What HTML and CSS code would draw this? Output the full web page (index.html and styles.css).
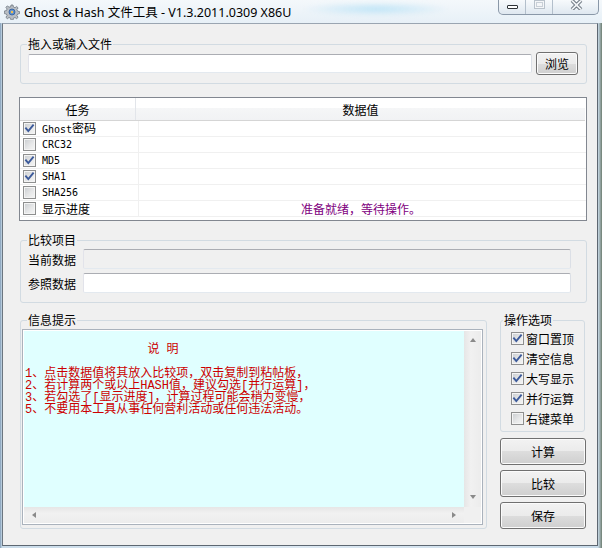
FILE: index.html
```html
<!DOCTYPE html>
<html lang="zh-CN">
<head>
<meta charset="utf-8">
<title>Ghost &amp; Hash 文件工具</title>
<link rel="stylesheet" href="styles.css">
</head>
<body>
<div class="window">
  <div class="titlebar">
    <svg class="appicon" viewBox="0 0 16 16">
      <g fill="#b9bec4" stroke="#6f7780" stroke-width="0.8">
        <path d="M7 1h2l.4 2 1.6.7 1.7-1.2 1.4 1.4-1.2 1.7.7 1.6 2 .4v2l-2 .4-.7 1.6 1.2 1.7-1.4 1.4-1.7-1.2-1.6.7-.4 2H7l-.4-2-1.6-.7-1.7 1.2-1.4-1.4 1.2-1.7-.7-1.6-2-.4V7l2-.4.7-1.6-1.2-1.7 1.4-1.4 1.7 1.2L6.6 3z"/>
      </g>
      <circle cx="8" cy="8" r="3" fill="#5b8fd0" stroke="#2f5c9a" stroke-width="0.8"/>
      <circle cx="8" cy="8" r="1.2" fill="#f2c14e"/>
    </svg>
    <span class="title">Ghost &amp; Hash 文件工具 - V1.3.2011.0309 X86U</span>
    <span class="glass"></span>
    <div class="caps">
      <span class="cap cap-min"><span class="min-ico"></span></span>
      <span class="cap cap-max">
        <svg class="max-ico" viewBox="0 0 11 9"><rect x="0.5" y="0.5" width="10" height="8" fill="#f4f6f8" stroke="#b9c2cb"/><rect x="2.5" y="2.5" width="6" height="4" fill="none" stroke="#c9d0d7"/></svg>
      </span>
      <span class="cap cap-close">
        <svg class="close-ico" viewBox="0 0 13 10"><path d="M2 0.5 11 9.5M11 0.5 2 9.5" stroke="#5e6873" stroke-width="3.6" fill="none"/><path d="M2 0.5 11 9.5M11 0.5 2 9.5" stroke="#eef1f4" stroke-width="1.8" fill="none"/></svg>
      </span>
    </div>
  </div>

  <div class="client">
    <fieldset class="group g-file">
      <legend>拖入或输入文件</legend>
      <div class="file-row">
        <span class="edit file-edit"></span>
        <button class="btn browse">浏览</button>
      </div>
    </fieldset>

    <div class="list">
      <div class="list-head">
        <span class="h1">任务</span>
        <span class="h2">数据值</span>
      </div>
      <div class="row">
        <span class="r1"><span class="cb"><svg class="tick" viewBox="0 0 11 11"><path d="M2 5.3 4.3 8 9 2.3"/></svg></span><span><span class="a">Ghost</span>密码</span></span>
        <span class="r2"></span>
      </div>
      <div class="row">
        <span class="r1"><span class="cb"></span><span class="a">CRC32</span></span>
        <span class="r2"></span>
      </div>
      <div class="row">
        <span class="r1"><span class="cb"><svg class="tick" viewBox="0 0 11 11"><path d="M2 5.3 4.3 8 9 2.3"/></svg></span><span class="a">MD5</span></span>
        <span class="r2"></span>
      </div>
      <div class="row">
        <span class="r1"><span class="cb"><svg class="tick" viewBox="0 0 11 11"><path d="M2 5.3 4.3 8 9 2.3"/></svg></span><span class="a">SHA1</span></span>
        <span class="r2"></span>
      </div>
      <div class="row">
        <span class="r1"><span class="cb"></span><span class="a">SHA256</span></span>
        <span class="r2"></span>
      </div>
      <div class="row">
        <span class="r1"><span class="cb"></span><span>显示进度</span></span>
        <span class="r2 status">准备就绪，等待操作。</span>
      </div>
    </div>

    <fieldset class="group g-cmp">
      <legend>比较项目</legend>
      <div class="cmp-row"><span class="lbl">当前数据</span><span class="edit disabled"></span></div>
      <div class="cmp-row"><span class="lbl">参照数据</span><span class="edit"></span></div>
    </fieldset>

    <div class="bottom">
      <fieldset class="group g-info">
        <legend>信息提示</legend>
        <div class="memo">
          <div class="memo-text">
                 说 明

1、点击数据值将其放入比较项，双击复制到粘帖板，
2、若计算两个或以上HASH值，建议勾选[并行运算]，
3、若勾选了[显示进度]，计算过程可能会稍为变慢，
5、不要用本工具从事任何营利活动或任何违法活动。</div>
          <div class="vscroll"><span class="arr arr-up"></span><span class="arr arr-down"></span></div>
          <div class="hscroll"><span class="arr arr-left"></span><span class="arr arr-right"></span></div>
          <div class="corner"></div>
        </div>
      </fieldset>

      <div class="side">
        <fieldset class="group g-opt">
          <legend>操作选项</legend>
          <div class="opt"><span class="cb"><svg class="tick" viewBox="0 0 11 11"><path d="M2 5.3 4.3 8 9 2.3"/></svg></span><span>窗口置顶</span></div>
          <div class="opt"><span class="cb"><svg class="tick" viewBox="0 0 11 11"><path d="M2 5.3 4.3 8 9 2.3"/></svg></span><span>清空信息</span></div>
          <div class="opt"><span class="cb"><svg class="tick" viewBox="0 0 11 11"><path d="M2 5.3 4.3 8 9 2.3"/></svg></span><span>大写显示</span></div>
          <div class="opt"><span class="cb"><svg class="tick" viewBox="0 0 11 11"><path d="M2 5.3 4.3 8 9 2.3"/></svg></span><span>并行运算</span></div>
          <div class="opt"><span class="cb"></span><span>右键菜单</span></div>
        </fieldset>
        <button class="btn side-btn first">计算</button>
        <button class="btn side-btn">比较</button>
        <button class="btn side-btn">保存</button>
      </div>
    </div>
  </div>
</div>
</body>
</html>
```

FILE: styles.css
```css
html, body {
  margin: 0;
  padding: 0;
}

body {
  width: 602px;
  height: 548px;
  overflow: hidden;
  background: #d6e4ef;
  font-family: "Noto Sans CJK SC", "Noto Sans", sans-serif;
  font-size: 12px;
  color: #000;
}

.window {
  display: flex;
  flex-direction: column;
  height: 548px;
  background: linear-gradient(to right, #7f9ab5 0, #c9dbe9 2px, #dce8f2 50%, #c9dbe9 calc(100% - 4px), #6d7d70 100%);
}

/* ---------- title bar ---------- */
.titlebar {
  flex: none;
  height: 23px;
  display: flex;
  align-items: center;
  background: linear-gradient(#f4f8fb, #e7f0f7);
}

.appicon {
  width: 16px;
  height: 16px;
  margin: 0 4px 0 4px;
  flex: none;
}

.title {
  font-family: "Noto Sans", "Noto Sans CJK SC", sans-serif;
  font-size: 12.5px;
  color: #000;
  white-space: nowrap;
}

.glass {
  align-self: flex-start;
  width: 150px;
  height: 14px;
  margin: 2px 0 0 10px;
  background: radial-gradient(ellipse at center, rgba(150, 215, 245, 0.55), rgba(190, 232, 250, 0) 70%);
  filter: blur(2px);
}

.caps {
  align-self: flex-start;
  margin-left: auto;
  margin-right: 3px;
  display: flex;
  height: 14px;
  border: 1px solid #8a98a8;
  border-top: none;
  border-radius: 0 0 5px 5px;
  overflow: hidden;
  background: linear-gradient(#f7fafc, #dfe8f0);
}

.cap {
  display: flex;
  justify-content: center;
}

.cap-min {
  width: 26px;
  border-right: 1px solid #b3bfcb;
}

.cap-max {
  width: 26px;
  border-right: 1px solid #b3bfcb;
}

.cap-close {
  width: 45px;
}

.min-ico {
  width: 11px;
  height: 4px;
  margin-top: 5px;
  box-sizing: border-box;
  border: 1px solid #2e3338;
  border-radius: 1px;
  background: #fff;
}

.max-ico {
  width: 11px;
  height: 9px;
}

.close-ico {
  width: 13px;
  height: 10px;
  margin-left: 2px;
}

/* ---------- client area ---------- */
.client {
  flex: 1;
  min-height: 0;
  margin: 0 4px 2px 2px;
  border: 1px solid;
  border-color: #9aa5b1 #5d6771 #5d6771 #6c7680;
  background: #f0f0f0;
  display: flex;
  flex-direction: column;
}

.group {
  margin: 0;
  min-width: 0;
  border: 1px solid #d2dbe2;
  border-radius: 3px;
}

.group legend {
  padding: 0 1px;
  margin-left: -1px;
  line-height: 14px;
  font-size: 12px;
}

.edit {
  display: block;
  box-sizing: border-box;
  height: 19px;
  border: 1px solid;
  border-color: #abadb3 #dbdfe6 #e3e9ef #e2e3ea;
  border-radius: 2px;
  background: #fff;
}

.edit.disabled {
  background: #f0f0f0;
}

.btn {
  font: inherit;
  color: #000;
  padding: 0;
  box-sizing: border-box;
  border: 1px solid #707070;
  border-radius: 3px;
  background: linear-gradient(#f2f2f2 0%, #ebebeb 50%, #dddddd 50%, #cfcfcf 100%);
  box-shadow: inset 0 0 0 1px #fbfbfb;
}

/* file group */
.g-file {
  margin: 13px 10px 0 17px;
  padding: 1px 8px 8px 7px;
}

.file-row {
  display: flex;
  align-items: center;
  gap: 4px;
}

.file-edit {
  flex: 1;
}

.browse {
  width: 42px;
  height: 23px;
  flex: none;
}

/* list view */
.list {
  margin: 13px 10px 0 16px;
  height: 124px;
  box-sizing: border-box;
  border: 1px solid #828790;
  background: #fff;
}

.list-head {
  display: flex;
  height: 23px;
  box-sizing: border-box;
  border-bottom: 1px solid #d5d5d5;
  margin-right: 1px;
  background: linear-gradient(#ffffff 0, #ffffff 45%, #f5f6f7 45%, #f1f2f4 100%);
}

.list-head span {
  display: flex;
  align-items: center;
  justify-content: center;
}

.h1 {
  width: 115px;
  border-right: 1px solid #e2e5ea;
}

.h2 {
  flex: 1;
}

.row {
  display: flex;
  height: 16px;
  box-sizing: border-box;
  border-bottom: 1px solid #f0f0f0;
  line-height: 15px;
}

.r1 {
  width: 115px;
  box-sizing: content-box;
  padding-left: 3px;
  margin-right: -3px;
  border-right: 1px solid #f0f0f0;
  display: flex;
  align-items: center;
  gap: 6px;
  white-space: nowrap;
}

.r2 {
  flex: 1;
  display: flex;
  align-items: center;
  justify-content: center;
}

.status {
  color: #800080;
}

.a {
  font-family: "DejaVu Sans Mono", monospace;
  font-size: 10px;
}

/* check box */
.cb {
  flex: none;
  width: 13px;
  height: 13px;
  box-sizing: border-box;
  border: 1px solid #8e8f8f;
  background: linear-gradient(135deg, #c9cccf 0%, #e6e7e8 55%, #f6f6f6 100%);
  box-shadow: inset 0 0 0 1px #f4f4f4;
  display: flex;
}

.tick {
  width: 11px;
  height: 11px;
}

.tick path {
  fill: none;
  stroke: #3c5a9a;
  stroke-width: 1.9;
  stroke-linecap: square;
}

/* compare group */
.g-cmp {
  margin: 12px 10px 0 17px;
  padding: 2px 15px 9px 7px;
}

.cmp-row {
  display: flex;
  align-items: center;
  height: 20px;
}

.cmp-row + .cmp-row {
  margin-top: 4px;
}

.lbl {
  width: 55px;
  flex: none;
}

.cmp-row .edit {
  flex: 1;
  height: 20px;
}

/* bottom area */
.bottom {
  display: flex;
  align-items: flex-start;
  margin: 10px 11px 0 17px;
}

.g-info {
  flex: 1;
  padding: 2px 3px 3px 1px;
}

.g-info legend {
  margin-left: 5px;
}

.memo {
  height: 196px;
  box-sizing: border-box;
  border: 1px solid #aab2bc;
  padding: 1px;
  background: #fff;
  display: grid;
  grid-template-columns: 1fr 17px;
  grid-template-rows: 1fr 16px;
}

.memo-text {
  background: #e0ffff;
  color: #cc0000;
  font-family: "Liberation Mono", "Noto Sans CJK SC", monospace;
  font-size: 12px;
  line-height: 12px;
  padding: 1px 0 0 1px;
  overflow: hidden;
  white-space: pre;
}

.vscroll {
  background: linear-gradient(to right, #e6e6e6, #f1f1f1 40%, #ececec);
  display: flex;
  flex-direction: column;
  justify-content: space-between;
  align-items: center;
  padding: 7px 0 8px;
}

.hscroll {
  background: linear-gradient(#e6e6e6, #f1f1f1 40%, #ececec);
  display: flex;
  justify-content: space-between;
  align-items: center;
  padding: 0 8px 0 8px;
}

.corner {
  background: #f0f0f0;
}

.arr {
  width: 0;
  height: 0;
  border-style: solid;
  border-color: transparent;
}

.arr-up {
  border-width: 0 3.5px 4px;
  border-bottom-color: #8a8a8a;
}

.arr-down {
  border-width: 4px 3.5px 0;
  border-top-color: #8a8a8a;
}

.arr-left {
  border-width: 3.5px 4px 3.5px 0;
  border-right-color: #8a8a8a;
}

.arr-right {
  border-width: 3.5px 0 3.5px 4px;
  border-left-color: #8a8a8a;
}

/* options */
.side {
  flex: none;
  width: 86px;
  margin-left: 13px;
  display: flex;
  flex-direction: column;
}

.g-opt {
  margin-right: 1px;
  padding: 1px 0 3px 10px;
}

.g-opt legend {
  margin-left: -8px;
}

.opt {
  display: flex;
  align-items: center;
  gap: 2px;
  height: 20px;
  white-space: nowrap;
}

.side-btn {
  width: 86px;
  height: 27px;
  margin-top: 5px;
}

.side-btn.first {
  margin-top: 6px;
}
```
